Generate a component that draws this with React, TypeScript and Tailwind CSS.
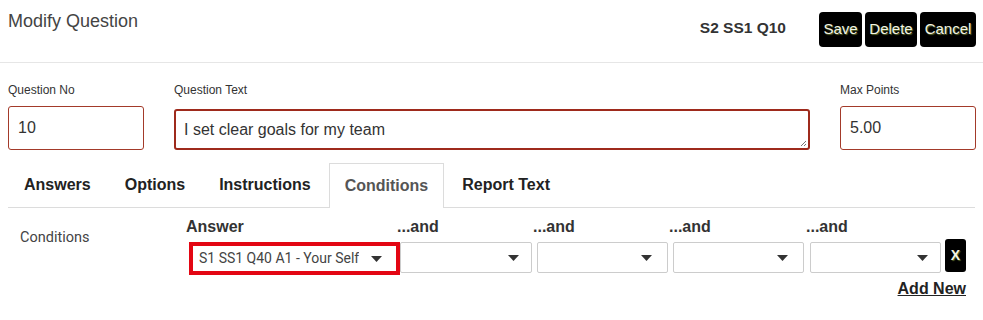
import React from "react";

const tabs = ["Answers", "Options", "Instructions", "Conditions", "Report Text"];

const buttons = [
  { label: "Save", w: "w-[43px]" },
  { label: "Delete", w: "w-[52px]" },
  { label: "Cancel", w: "w-[56px]" },
];

function Caret() {
  return (
    <svg width="11" height="6" viewBox="0 0 11 6" className="shrink-0">
      <path d="M0 0 L11 0 L5.5 6 Z" fill="#333" />
    </svg>
  );
}

function SelectBox({ value, className }: { value?: string; className: string }) {
  return (
    <div
      className={`flex items-center justify-between bg-white text-[14px] text-[#444] ${className}`}
      style={{ fontFamily: "Roboto, 'Noto Sans', sans-serif" }}
    >
      <span className="truncate">{value}</span>
      <Caret />
    </div>
  );
}

export default function App() {
  return (
    <div
      className="w-[983px] h-[320px] bg-white text-[#333] overflow-hidden"
      style={{ fontFamily: "'Liberation Sans', Arial, sans-serif" }}
    >
      {/* Header */}
      <div className="h-[63px] flex items-start justify-between border-b border-[#e6e6e6] pl-[8px] pr-[7px]">
        <h1 className="text-[18px] text-[#444] mt-[8px]">Modify Question</h1>
        <div className="flex items-center mt-[12px]">
          <span className="text-[15.5px] font-bold text-[#333] mr-[33px] -mt-[4px]">S2 SS1 Q10</span>
          <div className="flex gap-[3px]">
            {buttons.map((b) => (
              <button
                key={b.label}
                className={`h-[35px] ${b.w} rounded-[4px] bg-black text-[#f4f4e4] text-[15px]`}
                style={{ textShadow: "1px 1px 1px #5a6a2a" }}
              >
                {b.label}
              </button>
            ))}
          </div>
        </div>
      </div>

      {/* Fields */}
      <div className="flex items-start pl-[8px] pt-[18px]">
        <div className="w-[136px] shrink-0">
          <label className="block text-[12px] text-[#333] h-[25px]">Question No</label>
          <div className="h-[44px] border border-[#a33a2a] rounded-[3px] flex items-center pl-[9px] text-[16px] text-[#333]">
            10
          </div>
        </div>
        <div className="w-[636px] shrink-0 ml-[30px]">
          <label className="block text-[12px] text-[#333] h-[28px]">Question Text</label>
          <div className="relative h-[41px] border-2 border-[#9e2a1c] rounded-[3px] flex items-center pl-[8px] text-[16px] text-[#333]">
            I set clear goals for my team
            <svg width="7" height="7" viewBox="0 0 7 7" className="absolute right-[1px] bottom-[1px]">
              <path d="M1 6 L6 1 M4 6 L6 4" stroke="#777" strokeWidth="1" />
            </svg>
          </div>
        </div>
        <div className="w-[136px] shrink-0 ml-[30px]">
          <label className="block text-[12px] text-[#333] h-[25px]">Max Points</label>
          <div className="h-[44px] border border-[#a33a2a] rounded-[3px] flex items-center pl-[9px] text-[16px] text-[#333]">
            5.00
          </div>
        </div>
      </div>

      {/* Tabs */}
      <div className="mx-[8px] mt-[13px] flex border-b border-[#dcdcdc] h-[45px]">
        {tabs.map((t) => {
          const active = t === "Conditions";
          return (
            <div
              key={t}
              className={`px-[15px] mr-[2px] flex items-center text-[16px] font-bold ${
                active
                  ? "border border-b-0 border-[#dcdcdc] text-[#555] bg-white -mb-px h-[45px]"
                  : "text-[#222] border border-transparent"
              }`}
            >
              {t}
            </div>
          );
        })}
      </div>

      {/* Conditions */}
      <div className="flex pl-[20px] pt-[7px]">
        <div
          className="w-[166px] text-[14.5px] text-[#444] pt-[12px]"
          style={{ fontFamily: "Roboto, 'Noto Sans', sans-serif" }}
        >
          Conditions
        </div>
        <div className="flex flex-col items-end">
          <div className="flex items-end">
            <div className="flex flex-col w-[214px]">
              <span className="text-[16px] font-bold text-[#333] h-[27px]">Answer</span>
              <div className="ml-[3px] border-[4px] border-[#e30613] h-[33px] w-[211px] flex">
                <SelectBox value="S1 SS1 Q40 A1 - Your Self" className="w-full h-full pl-[6px] pr-[14px]" />
              </div>
            </div>
            <div className="flex flex-col w-[133px] -ml-[3px]">
              <span className="text-[16px] font-bold text-[#333] h-[27px]">...and</span>
              <SelectBox className="h-[31px] w-[132px] ml-[3px] mb-[2px] pr-[12px] border border-[#ccc] rounded-[2px]" />
            </div>
            <div className="flex flex-col w-[136px] ml-[3px]">
              <span className="text-[16px] font-bold text-[#333] h-[27px]">...and</span>
              <SelectBox className="h-[31px] w-[131px] ml-[4px] mb-[2px] pr-[15px] border border-[#ccc] rounded-[2px]" />
            </div>
            <div className="flex flex-col w-[137px]">
              <span className="text-[16px] font-bold text-[#333] h-[27px]">...and</span>
              <SelectBox className="h-[31px] w-[131px] ml-[4px] mb-[2px] pr-[15px] border border-[#ccc] rounded-[2px]" />
            </div>
            <div className="flex flex-col w-[135px]">
              <span className="text-[16px] font-bold text-[#333] h-[27px]">...and</span>
              <SelectBox className="h-[31px] w-[131px] ml-[4px] mb-[2px] pr-[12px] border border-[#ccc] rounded-[2px]" />
            </div>
            <button
              className="ml-[4px] mb-[3px] w-[21px] h-[33px] bg-black rounded-[3px] text-[#f4f4e4] text-[14px] font-bold"
              style={{ textShadow: "1px 1px 1px #5a6a2a" }}
            >
              X
            </button>
          </div>
          <a className="mt-[2px] text-[16px] font-bold text-[#222] underline">Add New</a>
        </div>
      </div>
    </div>
  );
}
